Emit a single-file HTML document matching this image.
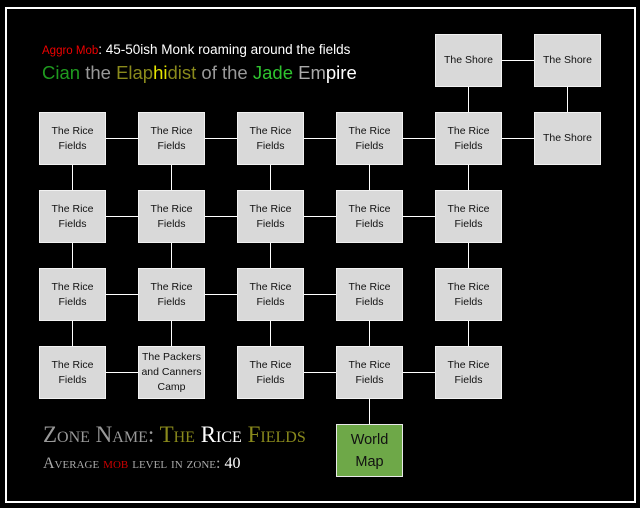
<!DOCTYPE html>
<html><head><style>
body{margin:0;width:640px;height:508px;background:#000;position:relative;overflow:hidden;font-family:"Liberation Sans",sans-serif}
.frame{position:absolute;left:5px;top:7px;width:627px;height:492px;border:2px solid #fff}
.b{position:absolute;width:65px;height:51px;background:#d9d9d9;border:1px solid #f2f2f2;display:flex;align-items:center;justify-content:center;text-align:center;font-size:10.5px;line-height:15px;color:#111}
.h{position:absolute;height:1px;background:#fff}
.v{position:absolute;width:1px;background:#fff}
.t{position:absolute;white-space:nowrap}
</style></head><body>
<div class="frame"></div>
<div class="t" style="left:42px;top:42px;font-size:13.5px;color:#fff"><span style="color:#e00;font-size:11.5px">Aggro Mob</span>: 45-50ish Monk roaming around the fields</div>
<div class="t" style="left:42px;top:62px;font-size:18.5px;color:#999"><span style="color:#1f9a1f">Cian</span> the <span style="color:#8a8a1c">Elap</span><span style="color:#e6e600">hi</span><span style="color:#8a8a1c">dist</span> of the <span style="color:#2fc42f">Jade</span> <span style="color:#aaa">Em</span><span style="color:#fff">pire</span></div>
<div class="t" style="left:43px;top:422px;font-size:23px;font-family:'Liberation Serif',serif;font-variant:small-caps;color:#999">Zone Name: <span style="color:#8a8a1c">The </span><span style="color:#fff">Rice </span><span style="color:#8a8a1c">Fields</span></div>
<div class="t" style="left:43px;top:455px;font-size:16px;font-family:'Liberation Serif',serif;font-variant:small-caps;color:#aaa">Average <span style="color:#c00">mob</span> level in zone: <span style="color:#fff">40</span></div>
<div id="g"></div>
<script>
var X=[39,138,237,336,435,534],Y=[34,112,190,268,346],H='';
function box(c,r,t){H+='<div class="b" style="left:'+X[c]+'px;top:'+Y[r]+'px">'+t+'</div>'}
function hl(r,c){H+='<div class="h" style="left:'+(X[c]+66)+'px;top:'+(Y[r]+26)+'px;width:33px"></div>'}
function vl(r,c){H+='<div class="v" style="left:'+(X[c]+33)+'px;top:'+(Y[r]+53)+'px;height:25px"></div>'}
hl(0,4);vl(0,4);vl(0,5);
[0,1,2,3,4].forEach(function(c){hl(1,c);vl(1,c)});
[0,1,2,3].forEach(function(c){hl(2,c)});[0,1,2,4].forEach(function(c){vl(2,c)});
[0,1,2].forEach(function(c){hl(3,c)});[0,1,2,3,4].forEach(function(c){vl(3,c)});
[0,2,3].forEach(function(c){hl(4,c)});vl(4,3);
var RF='The Rice<br>Fields';
box(4,0,'The Shore');box(5,0,'The Shore');
for(var c=0;c<5;c++){box(c,1,RF);box(c,2,RF);box(c,3,RF);box(c,4,c==1?'The Packers<br>and Canners<br>Camp':RF)}
box(5,1,'The Shore');
H+='<div class="b" style="left:336px;top:424px;background:#6ea848;border-color:#e8e8e8;font-size:14.5px;line-height:22px;color:#111">World<br>Map</div>';
document.getElementById('g').innerHTML=H;
</script>
</body></html>
